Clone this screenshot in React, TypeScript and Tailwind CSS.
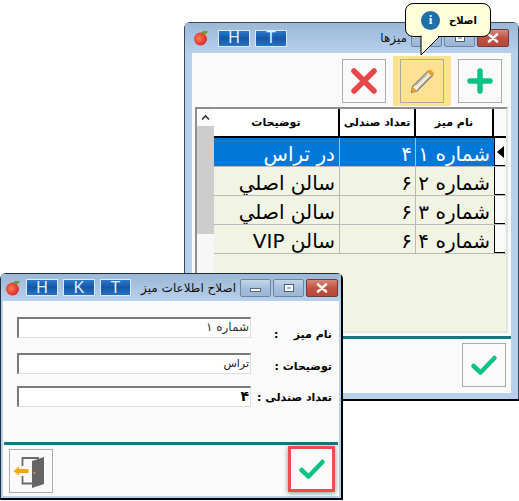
const fa = "font-['DejaVu_Sans',sans-serif]";

function Apple() {
  return (
    <svg width="16" height="16" viewBox="0 0 16 16" className="shrink-0">
      <defs>
        <radialGradient id="apple" cx="40%" cy="45%" r="65%">
          <stop offset="0%" stopColor="#ff7a50" />
          <stop offset="100%" stopColor="#d4202a" />
        </radialGradient>
      </defs>
      <circle cx="7.5" cy="9" r="6.5" fill="url(#apple)" />
      <path d="M8 3 C9 1 12 0.5 15 1.5 C14 4 11 5 8 3Z" fill="#6f9a3a" />
      <path d="M12 4 C14 5 15 7 14.5 9 L13 6Z" fill="#e8b04a" />
    </svg>
  );
}

function Letter({ ch, w = "w-[32px]" }: { ch: string; w?: string }) {
  return (
    <div className={`${w} h-[17px] shrink-0 border border-[#dbe9f7] bg-gradient-to-b from-[#2a78cc] via-[#1557a6] to-[#2a72c0] flex items-center justify-center text-[#e6f0fa] text-[16px] leading-none font-['Liberation_Sans',sans-serif]`}>
      {ch}
    </div>
  );
}

function Caption({ kind }: { kind: "min" | "max" | "close" }) {
  if (kind === "close") {
    return (
      <div className="w-[32px] h-[18px] shrink-0 rounded-[2px] border border-[#6f3b3b] bg-gradient-to-b from-[#d8877c] via-[#c0503f] to-[#b8483a] flex items-center justify-center">
        <svg width="14" height="10" viewBox="0 0 14 10">
          <path d="M3 1.5 L11 8.5 M11 1.5 L3 8.5" stroke="#f4f4f4" strokeWidth="2.6" strokeLinecap="round" />
        </svg>
      </div>
    );
  }
  return (
    <div className="w-[31px] h-[18px] shrink-0 rounded-[2px] border border-[#6d87a3] bg-gradient-to-b from-[#c3d6ea] via-[#a5bfdb] to-[#9ab7d6] flex items-center justify-center">
      {kind === "min" ? (
        <div className="w-[11px] h-[4px] mt-[4px] bg-white border border-[#5a6b80]" />
      ) : (
        <div className="w-[10px] h-[8px] bg-white border border-[#4d5c70] flex items-center justify-center">
          <div className="w-[4px] h-[2px] bg-[#9ab7d6]" />
        </div>
      )}
    </div>
  );
}

function IconButton({ children, className = "" }: { children: React.ReactNode; className?: string }) {
  return (
    <div className={`w-[44px] h-[44px] shrink-0 border border-[#ababab] flex items-center justify-center ${className}`}>
      {children}
    </div>
  );
}

function CheckIcon() {
  return (
    <svg width="28" height="24" viewBox="0 0 28 24">
      <path d="M3.5 13 L10.5 19.5 L24.5 5" fill="none" stroke="#0cc285" strokeWidth="4.5" strokeLinecap="round" strokeLinejoin="round" />
    </svg>
  );
}

function Row({ name, seats, note, active }: { name: string; seats: string; note: string; active?: boolean }) {
  const cell = active ? "bg-[#0078d7] text-white" : "bg-[#f1f4e3] text-black";
  return (
    <div className="flex h-[29px] border-b border-[#b9b9b9]">
      <div dir="rtl" className={`w-[126px] pr-[4px] text-[20px] leading-[33px] border-r border-[#b9b9b9] whitespace-nowrap overflow-hidden ${cell}`}>{note}</div>
      <div dir="rtl" className={`w-[76px] pr-[3px] text-[20px] leading-[33px] border-r border-[#b9b9b9] overflow-hidden ${cell}`}>{seats}</div>
      <div dir="rtl" className={`w-[78px] pr-[4px] text-[20px] leading-[33px] whitespace-nowrap overflow-hidden ${cell}`}>{name}</div>
      <div className="w-[11px] bg-[#fafafa] border-l border-b border-black flex items-center justify-center">
        {active && <div className="w-0 h-0 border-y-[6px] border-y-transparent border-r-[7px] border-r-black" />}
      </div>
    </div>
  );
}

function Field({ label, value, valueClass, labelClass }: { label: string; value: string; valueClass: string; labelClass: string }) {
  return (
    <div className="flex items-start h-[21px]">
      <div dir="rtl" className={`w-[234px] h-[21px] shrink-0 bg-white border-t-2 border-l-2 border-t-[#7a7a7a] border-l-[#7a7a7a] border-r border-b border-r-[#dfdfdf] border-b-[#dfdfdf] pr-[1px] ${valueClass}`}>
        {value}
      </div>
      <div dir="rtl" className={`flex-1 pr-[7px] text-[11px] font-bold text-black whitespace-pre ${labelClass}`}>{label}</div>
    </div>
  );
}

export default function App() {
  return (
    <div className={`relative w-[519px] h-[501px] bg-white overflow-hidden ${fa}`}>
      {/* back window */}
      <div className="absolute left-[184px] top-[22px] w-[335px] h-[379px] rounded-t-[6px] border border-[#3a4a5a] border-b-2 border-b-black bg-[#b7d0ec] flex flex-col">
        <div className="h-[30px] shrink-0 bg-gradient-to-b from-[#9cb8d6] to-[#b7d0ec] flex items-center pl-[8px] pr-[9px]">
          <Apple />
          <div className="flex gap-[5px] ml-[9px]">
            <Letter ch="H" />
            <Letter ch="T" />
          </div>
          <div className="ml-auto mr-[4px] text-[12px] text-[#111]">میزها</div>
          <div className="flex gap-[2px]">
            <Caption kind="min" />
            <Caption kind="max" />
            <Caption kind="close" />
          </div>
        </div>
        <div className="mx-[7px] h-[340px] bg-[#fafafa] flex flex-col">
          <div className="h-[54px] shrink-0 flex items-center justify-end pr-[9px] pt-[2px]">
            <IconButton className="bg-[#fafafa]">
              <svg width="30" height="30" viewBox="0 0 30 30">
                <path d="M5 5 L25 25 M25 5 L5 25" stroke="#e8474a" strokeWidth="5.5" strokeLinecap="round" />
              </svg>
            </IconButton>
            <div className="w-[58px] h-[50px] mx-[7px] bg-[#fde293] flex items-center justify-center">
              <IconButton>
                <svg width="26" height="26" viewBox="0 0 26 26">
                  <path d="M19 3 L23.5 7.5 L8 23 L2.5 24.5 L3.5 18.5Z" fill="#f7f0d4" stroke="#7d7d7d" strokeWidth="1.2" />
                  <path d="M18 4 L20 2 C20.5 1.5 21.5 1.5 22 2 L24.5 4.5 C25 5 25 6 24.5 6.5 L22.5 8.5Z" fill="#e89f2e" />
                  <path d="M2.5 24.5 L3.5 18.5 L8 23Z" fill="#e89f2e" />
                  <path d="M6.5 17.5 L18.5 6 M9.5 20.5 L21 8.5" stroke="#8f8f8f" strokeWidth="1" />
                </svg>
              </IconButton>
            </div>
            <IconButton>
              <svg width="26" height="26" viewBox="0 0 26 26">
                <path d="M13 3 V23 M3 13 H23" stroke="#0cc285" strokeWidth="5.5" strokeLinecap="round" />
              </svg>
            </IconButton>
          </div>
          <div className="mx-[3px] h-[226px] shrink-0 border-2 border-[#8f8f8f] border-b-[#e4e4e4] border-r-[#e4e4e4] flex bg-[#f1f4e3]">
            <div className="w-[17px] shrink-0 bg-[#fafafa] flex flex-col">
              <div className="h-[17px] flex items-center justify-center">
                <svg width="9" height="7" viewBox="0 0 9 7">
                  <path d="M1 5.5 L4.5 2 L8 5.5" fill="none" stroke="#333" strokeWidth="1.6" />
                </svg>
              </div>
              <div className="h-[108px] bg-[#cdcdcd]" />
              <div className="flex-1 bg-[#f7f7f7]" />
            </div>
            <div className="flex-1 flex flex-col min-w-0">
              <div className="flex h-[29px] bg-white border-b-2 border-black text-[11px] font-bold text-black text-center leading-[27px] whitespace-nowrap">
                <div className="w-[126px] border-r-2 border-black">توضیحات</div>
                <div className="w-[76px] border-r-2 border-black">تعداد صندلی</div>
                <div className="w-[78px] border-r-2 border-black">نام میز</div>
                <div className="w-[11px] bg-[#fafafa]" />
              </div>
              <Row name="شماره ۱" seats="۴" note="در تراس" active />
              <Row name="شماره ۲" seats="۶" note="سالن اصلي" />
              <Row name="شماره ۳" seats="۶" note="سالن اصلي" />
              <Row name="شماره ۴" seats="۶" note="سالن VIP" />
            </div>
          </div>
          <div className="h-[3px] mt-[3px] shrink-0 bg-[#13797b]" />
          <div className="flex justify-end pr-[5px] pt-[4px]">
            <IconButton>
              <CheckIcon />
            </IconButton>
          </div>
        </div>
      </div>

      {/* tooltip */}
      <div className="absolute left-[405px] top-[3px] w-[86px] h-[34px] rounded-[8px] border border-black bg-[#ffffd9] flex items-center justify-center gap-[9px] pl-[2px]">
        <div className="w-[19px] h-[19px] rounded-full bg-[#1f6fa8] text-white flex items-center justify-center text-[13px] font-bold font-['Liberation_Serif',serif] order-first">i</div>
        <span className="text-[10px] font-bold text-black">اصلاح</span>
      </div>
      <svg className="absolute left-[419px] top-[35px]" width="24" height="22" viewBox="0 0 24 22">
        <path d="M2 0.5 L2 20 L20 2" fill="#ffffd9" stroke="#000" strokeWidth="1" />
        <path d="M3 0 H19 V2 H3Z" fill="#ffffd9" />
      </svg>

      {/* front window */}
      <div className="absolute left-0 top-[273px] w-[343px] h-[227px] rounded-t-[6px] border border-[#20303a] border-r-2 border-r-black border-b-2 border-b-black bg-[#b7d0ec] flex flex-col">
        <div className="h-[27px] shrink-0 bg-gradient-to-b from-[#9cb8d6] to-[#b7d0ec] flex items-center pl-[4px] pr-[3px]">
          <Apple />
          <div className="flex gap-[5px] ml-[5px]">
            <Letter ch="H" />
            <Letter ch="K" />
            <Letter ch="T" w="w-[31px]" />
          </div>
          <div className="ml-auto mr-[4px] text-[12px] text-[#111] whitespace-nowrap">اصلاح اطلاعات میز</div>
          <div className="flex gap-[2px]">
            <Caption kind="min" />
            <Caption kind="max" />
            <Caption kind="close" />
          </div>
        </div>
        <div className="mx-[2px] mb-[2px] flex-1 bg-[#fafafa] flex flex-col">
          <div className="h-[141px] shrink-0 pl-[14px] pt-[16px] flex flex-col">
            <Field label="نام میز    :" value="شماره ۱" valueClass="text-[12px] leading-[17px] text-[#333]" labelClass="pt-[10px]" />
            <div className="h-[15px]" />
            <Field label="توضیحات :" value="تراس" valueClass="text-[11px] leading-[18px] text-[#222]" labelClass="pt-[6px]" />
            <div className="h-[12px]" />
            <Field label="تعداد صندلی :" value="۴" valueClass="text-[14px] leading-[17px] font-bold text-black" labelClass="pt-[4px]" />
          </div>
          <div className="h-[3px] mx-[1px] shrink-0 bg-[#13797b]" />
          <div className="flex items-start justify-between pl-[6px] pr-[4px] pt-[1px]">
            <div className="mt-[3px]">
              <IconButton>
                <svg width="36" height="36" viewBox="0 0 36 36">
                  <path d="M26 5 H9.5 V13 M9.5 23 V30.5 H19" fill="none" stroke="#6b6b6b" strokeWidth="1.8" />
                  <path d="M19 8 L31 4 V31 L19 35Z" fill="#656565" />
                  <circle cx="21.5" cy="20" r="1" fill="#e8a33a" />
                  <path d="M0.5 18 L6 13.5 V16 H15.5 V20 H6 V22.5Z" fill="#f6a70f" />
                </svg>
              </IconButton>
            </div>
            <div className="w-[47px] h-[46px] border-[3px] border-[#f04b4e] shadow-[0_1px_5px_rgba(0,0,0,0.45)] flex items-center justify-center">
              <CheckIcon />
            </div>
          </div>
        </div>
      </div>
    </div>
  );
}
